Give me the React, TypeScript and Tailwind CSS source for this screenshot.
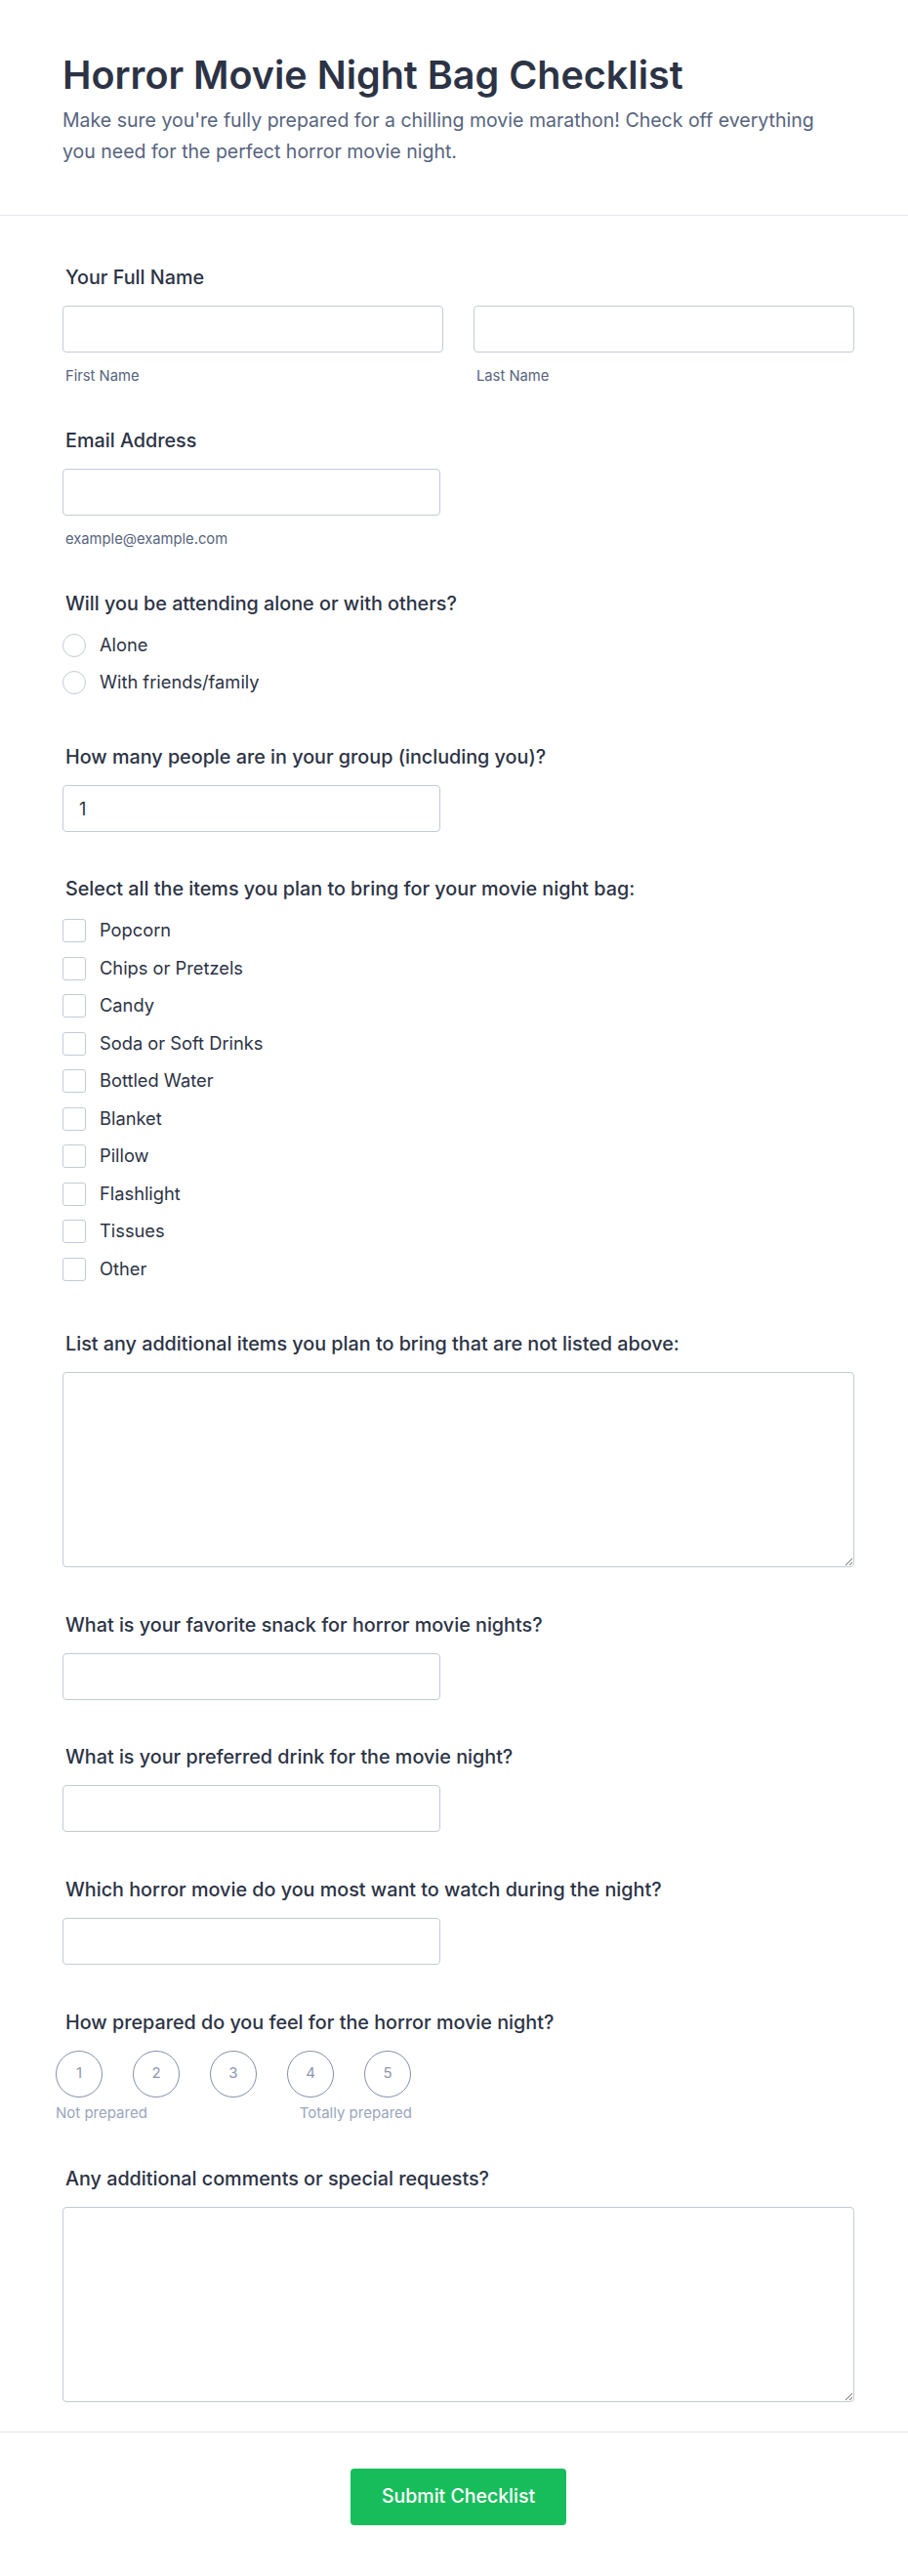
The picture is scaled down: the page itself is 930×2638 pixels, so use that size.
import type { ReactNode } from "react";

const items = [
  "Popcorn",
  "Chips or Pretzels",
  "Candy",
  "Soda or Soft Drinks",
  "Bottled Water",
  "Blanket",
  "Pillow",
  "Flashlight",
  "Tissues",
  "Other",
];

// label + content block; pb sets space to next question
function Field({ label, children, className = "" }: { label: string; children: ReactNode; className?: string }) {
  return (
    <div className={className}>
      <label className="block h-7 text-[19.75px] leading-7 font-medium text-[#2c3345] pl-[3px] mb-[15px]">{label}</label>
      {children}
    </div>
  );
}

function TextInput({ className = "", value }: { className?: string; value?: string }) {
  return (
    <input
      type="text"
      defaultValue={value}
      className={`h-12 rounded-[4px] border border-[#c3cad8] bg-white px-4 text-lg text-[#2c3345] outline-none ${className}`}
    />
  );
}

function Sub({ children }: { children: ReactNode }) {
  return <div className="mt-[14px] h-5 text-[14.75px] leading-5 text-[#57647e] pl-[3px]">{children}</div>;
}

export default function App() {
  return (
    <div className="min-h-screen bg-white font-['Inter','Noto_Sans',sans-serif] text-[#2c3345]">
      <header className="px-16 pt-[55px] pb-[49px] border-b border-[#e4e6ef]">
        <h1 className="text-[39.5px] leading-[44px] font-semibold text-[#2c3345]">Horror Movie Night Bag Checklist</h1>
        <p className="mt-2 text-[19.5px] leading-8 text-[#57647e]">
          Make sure you're fully prepared for a chilling movie marathon! Check off everything you need for the perfect horror movie night.
        </p>
      </header>

      <form className="pl-16 pr-[55px] pt-[49px] pb-[30px] flex flex-col">
        <Field label="Your Full Name" className="pb-[42px]">
          <div className="grid grid-cols-2 gap-[31px]">
            <div>
              <TextInput className="w-full" />
              <Sub>First Name</Sub>
            </div>
            <div>
              <TextInput className="w-full" />
              <Sub>Last Name</Sub>
            </div>
          </div>
        </Field>

        <Field label="Email Address" className="pb-[42px]">
          <TextInput className="w-[387px]" />
          <Sub>example@example.com</Sub>
        </Field>

        <Field label="Will you be attending alone or with others?" className="pb-[48px]">
          <div className="flex flex-col gap-[10px]">
            {["Alone", "With friends/family"].map((o) => (
              <div key={o} className="flex items-center h-7 gap-[14px]">
                <span className="w-6 h-6 rounded-full border border-[#c3cad8] bg-white" />
                <span className="text-[18.3px] text-[#2c3345]">{o}</span>
              </div>
            ))}
          </div>
        </Field>

        <Field label="How many people are in your group (including you)?" className="pb-[44px]">
          <TextInput className="w-[387px]" value="1" />
        </Field>

        <Field label="Select all the items you plan to bring for your movie night bag:" className="pb-[48px]">
          <div className="flex flex-col gap-[10.5px]">
            {items.map((o) => (
              <div key={o} className="flex items-center h-7 gap-[14px]">
                <span className="w-6 h-6 rounded-[3px] border border-[#c3cad8] bg-white" />
                <span className="text-[18.3px] text-[#2c3345]">{o}</span>
              </div>
            ))}
          </div>
        </Field>

        <Field label="List any additional items you plan to bring that are not listed above:" className="pb-[45px]">
          <textarea className="block w-full h-[200px] rounded-[4px] border border-[#c3cad8] bg-white p-4 outline-none" />
        </Field>

        <Field label="What is your favorite snack for horror movie nights?" className="pb-[44px]">
          <TextInput className="w-[387px]" />
        </Field>

        <Field label="What is your preferred drink for the movie night?" className="pb-[45px]">
          <TextInput className="w-[387px]" />
        </Field>

        <Field label="Which horror movie do you most want to watch during the night?" className="pb-[45px]">
          <TextInput className="w-[387px]" />
        </Field>

        <Field label="How prepared do you feel for the horror movie night?" className="pb-[43px]">
          <div className="ml-[-7px] w-[365px]">
            <div className="flex gap-[31px]">
              {[1, 2, 3, 4, 5].map((n) => (
                <div
                  key={n}
                  className="w-12 h-12 rounded-full border border-[#858fa8] flex items-center justify-center text-[15px] text-[#8d97ad]"
                >
                  {n}
                </div>
              ))}
            </div>
            <div className="mt-[6px] flex justify-between h-5 text-[15px] leading-5 text-[#9aa6bd]">
              <span>Not prepared</span>
              <span>Totally prepared</span>
            </div>
          </div>
        </Field>

        <Field label="Any additional comments or special requests?">
          <textarea className="block w-full h-[200px] rounded-[4px] border border-[#c3cad8] bg-white p-4 outline-none" />
        </Field>
      </form>

      <footer className="border-t border-[#e4e6ef] pl-16 pr-[55px] pt-[37px] pb-[50px] flex justify-center">
        <button
          type="button"
          className="h-[58px] w-[221px] rounded-[4px] bg-[#18bd5b] text-[19.5px] font-medium text-white"
        >
          Submit Checklist
        </button>
      </footer>
    </div>
  );
}
